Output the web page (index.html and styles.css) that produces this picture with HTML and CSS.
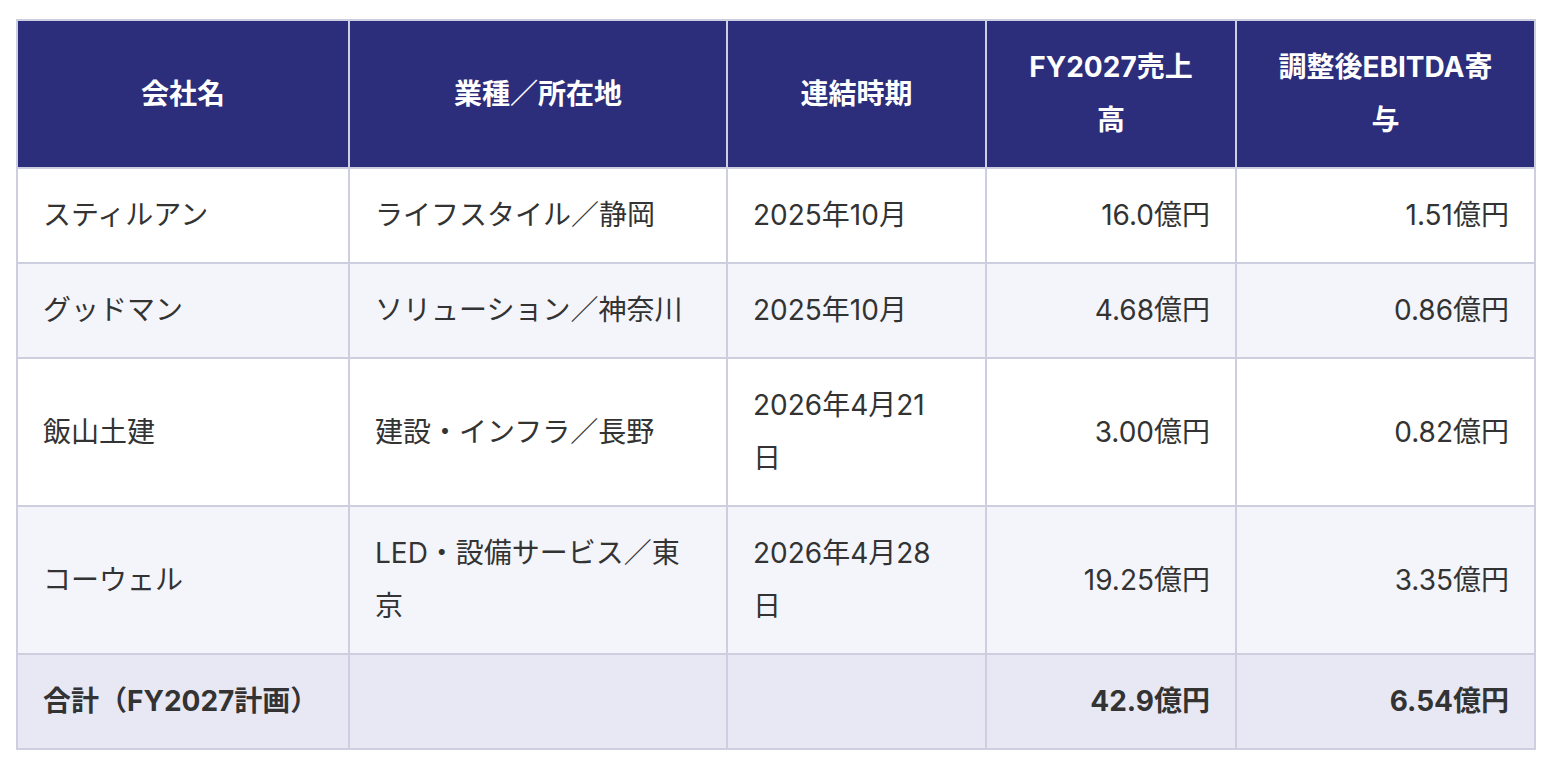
FILE: index.html
```html
<!DOCTYPE html>
<html lang="ja">
<head>
<meta charset="utf-8">
<link rel="stylesheet" href="styles.css">
</head>
<body>
<div class="wrap">
<table class="ma-table">
  <colgroup>
    <col class="c1"><col class="c2"><col class="c3"><col class="c4"><col class="c5">
  </colgroup>
  <thead>
    <tr>
      <th>会社名</th>
      <th>業種／所在地</th>
      <th>連結時期</th>
      <th>FY2027売上<br>高</th>
      <th>調整後EBITDA寄<br>与</th>
    </tr>
  </thead>
  <tbody>
    <tr>
      <td>スティルアン</td>
      <td>ライフスタイル／静岡</td>
      <td>2025年10月</td>
      <td class="num">16.0億円</td>
      <td class="num">1.51億円</td>
    </tr>
    <tr class="alt">
      <td>グッドマン</td>
      <td>ソリューション／神奈川</td>
      <td>2025年10月</td>
      <td class="num">4.68億円</td>
      <td class="num">0.86億円</td>
    </tr>
    <tr>
      <td>飯山土建</td>
      <td>建設・インフラ／長野</td>
      <td>2026年4月21<br>日</td>
      <td class="num">3.00億円</td>
      <td class="num">0.82億円</td>
    </tr>
    <tr class="alt">
      <td>コーウェル</td>
      <td>LED・設備サービス／東<br>京</td>
      <td>2026年4月28<br>日</td>
      <td class="num">19.25億円</td>
      <td class="num">3.35億円</td>
    </tr>
    <tr class="total">
      <td>合計（FY2027計画）</td>
      <td></td>
      <td></td>
      <td class="num">42.9億円</td>
      <td class="num">6.54億円</td>
    </tr>
  </tbody>
</table>
</div>
</body>
</html>
```

FILE: styles.css
```css
html, body {
  margin: 0;
  padding: 0;
  background: #ffffff;
}

.wrap {
  padding: 19px 0 0 16px;
}

.ma-table {
  border-collapse: collapse;
  table-layout: fixed;
  width: 1520px;
  font-family: "Inter", "Noto Sans CJK JP", sans-serif;
  font-size: 28px;
  line-height: 53px;
  color: #333333;
}

.c1 { width: 332px; }
.c2 { width: 378px; }
.c3 { width: 259px; }
.c4 { width: 250px; }
.c5 { width: 299px; }

.ma-table th,
.ma-table td {
  border: 2px solid #cdcee0;
  padding: 20px 25px;
  vertical-align: middle;
  text-align: left;
}

.ma-table th {
  background: #2c2e7b;
  color: #ffffff;
  font-weight: 700;
  text-align: center;
}

.ma-table td.num {
  text-align: right;
}

.ma-table tr.alt td {
  background: #f4f5fa;
}

.ma-table tr.total td {
  background: #e8e8f4;
  font-weight: 700;
}
```
